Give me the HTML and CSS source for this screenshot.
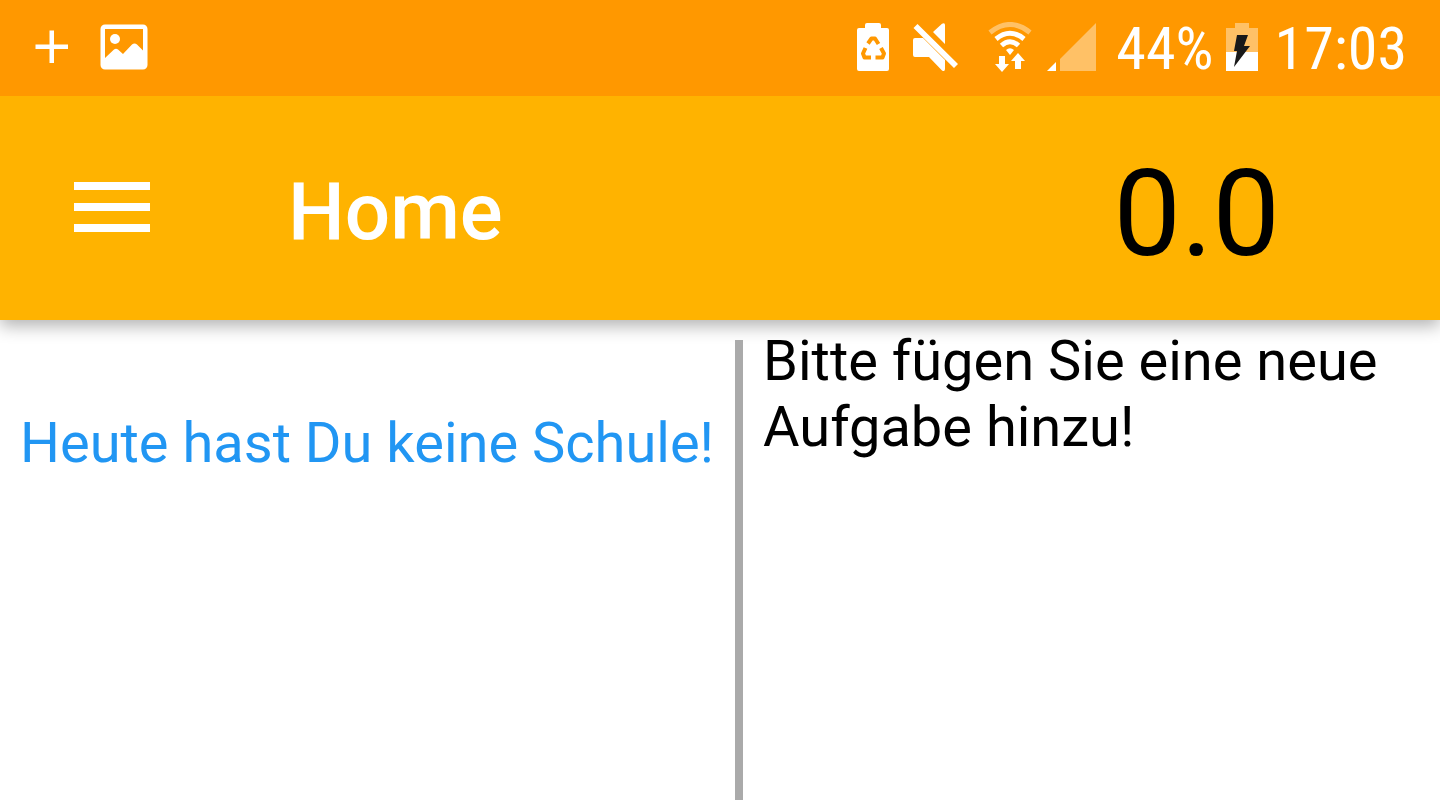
FILE: index.html
```html
<!DOCTYPE html>
<html lang="de">
<head>
<meta charset="utf-8">
<meta name="viewport" content="width=device-width, initial-scale=1">
<title>Home</title>
<link rel="stylesheet" href="styles.css">
</head>
<body>
<div class="status-bar">
  <div class="notifications">
    <svg width="34" height="34" viewBox="0 0 34 34" aria-hidden="true"><path fill="#fff" d="M14.500 .5h4.500v14h14v4.500H19v14h-4.500V19h-14v-4.500h14z"/></svg>
    <svg width="48" height="46" viewBox="0 0 48 46" aria-hidden="true"><path fill="#fff" fill-rule="evenodd" d="M5 .5h38a4.500 4.500 0 0 1 4.500 4.500v36a4.500 4.500 0 0 1-4.500 4.500H5A4.500 4.500 0 0 1 .5 41V5A4.500 4.500 0 0 1 5 .5zM5 5v29l9-8.500q2-1.500 4 0l5 4.500 9-9.500q2.500-2 5 0l6 6V5z"/><circle cx="15" cy="15" r="5" fill="#fff"/></svg>
  </div>
  <div class="system">
    <svg class="icon-saver" width="32" height="48" viewBox="0 0 32 48" aria-hidden="true"><path fill="#fff" d="M2 5h6V2q0-2 2-2h12q2 0 2 2v3h6q2 0 2 2v39q0 2-2 2H2q-2 0-2-2V7q0-2 2-2z"/><g fill="none" stroke="#ff9800" stroke-width="4" stroke-linejoin="round"><path d="M11 20.500l3.500-5h3.500l3.500 5.500"/><path d="M8.500 25l-2.500 5.500 1.500 4H14"/><path d="M24 25l3 5.500-1.500 4H18.500"/></g></svg>
    <svg class="icon-mute" width="46" height="48" viewBox="0 0 46 48" aria-hidden="true"><path fill="#fff" d="M4.500 1L45 41l-4 4L.5 5zM20 9L29 .8q3-1.500 3 1.200v19zM2 15h8l22 22v9q0 3-3 1.500L16 34H2q-2 0-2-2V17q0-2 2-2z"/></svg>
    <svg class="icon-wifi" width="44" height="50" viewBox="0 0 44 50" aria-hidden="true"><g fill="none" stroke="#fff" stroke-width="5"><path stroke-opacity=".4" d="M2 10.500Q22-5.500 42 10.500"/><path d="M8 17Q22 5.500 36 17"/><path d="M13.500 23.500Q22 16 30.500 23.500"/></g><path fill="#fff" d="M18 28q4-3.500 8 0l-4 5zM11 34h6v8h4l-7 8-7-8h4zM30 31l7 8h-4v8h-6v-8h-4z"/></svg>
    <svg class="icon-signal" width="49" height="49" viewBox="0 0 49 49" aria-hidden="true"><path fill="#fff" fill-opacity=".4" d="M49 0v48H13V36z"/><path fill="#fff" d="M9 39v9H0z"/></svg>
    <span class="reading">44%</span>
    <svg class="icon-battery" width="32" height="48" viewBox="0 0 32 48" aria-hidden="true"><path fill="#fff" fill-opacity=".4" d="M0 5h9V0h14v5h9v24H0z"/><path fill="#fff" d="M0 29h32v19H0z"/><path fill="#191919" d="M11 12h11l-4 11h6L8 44l3-16H8z"/></svg>
    <time class="reading">17:03</time>
  </div>
</div>
<header class="app-bar">
  <button class="menu" type="button" aria-label="Menü"><svg width="76" height="50" viewBox="0 0 76 50" aria-hidden="true"><path fill="#fff" d="M0 0h76v8H0zM0 21h76v8H0zM0 42h76v8H0z"/></svg></button>
  <h1 class="title">Home</h1>
  <span class="average">0.0</span>
</header>
<main class="content">
  <section class="schedule"><p class="text">Heute hast Du keine Schule!</p></section>
  <div class="divider"></div>
  <section class="tasks"><p class="text">Bitte fügen Sie eine neue Aufgabe hinzu!</p></section>
</main>
</body>
</html>
```
FILE: styles.css
```css
* {
  box-sizing: border-box;
}

body {
  margin: 0;
  min-height: 100vh;
  display: flex;
  flex-direction: column;
  background: #fff;
  color: #000;
  font-family: Roboto, sans-serif;
}

svg {
  display: block;
  flex: none;
}

.status-bar {
  position: relative;
  z-index: 1;
  display: flex;
  justify-content: space-between;
  align-items: center;
  height: 96px;
  padding: 0 33px 2px 35px;
  background: #ff9800;
  color: #fff;
  font-family: "Roboto Condensed", Roboto, sans-serif;
  font-size: 60px;
  line-height: 72px;
}

.notifications {
  display: flex;
  align-items: center;
  gap: 31px;
}

.system {
  display: flex;
  align-items: center;
}

.reading {
  padding-top: 4px;
}

.icon-saver {
  margin-right: 24px;
}

.icon-mute {
  margin-right: 29px;
}

.icon-wifi {
  margin-right: 15px;
}

.icon-signal {
  margin-right: 20px;
}

.icon-battery {
  margin: 0 17px 0 12px;
}

.app-bar {
  display: flex;
  align-items: center;
  height: 224px;
  padding: 0 160px 0 74px;
  background: #ffb300;
  box-shadow: 0 6px 16px rgba(0, 0, 0, 0.3);
}

.menu {
  padding: 0 0 2px;
  border: 0;
  background: none;
  cursor: pointer;
}

.title {
  flex: 1;
  margin: 0;
  padding: 8px 0 0 138px;
  color: #fff;
  font-size: 80px;
  font-weight: 500;
  line-height: 96px;
}

.average {
  padding-top: 12px;
  font-size: 120px;
  line-height: 140px;
}

.content {
  flex: 1;
  display: flex;
  padding-top: 8px;
}

.text {
  margin: 0;
  font-size: 56px;
  line-height: 66px;
}

.schedule {
  padding: 82px 21px 0 20px;
  color: #2196f3;
}

.divider {
  flex: none;
  width: 8px;
  margin-top: 12px;
  background: #aaa;
}

.tasks {
  flex: 1;
  padding: 0 20px;
}
```
